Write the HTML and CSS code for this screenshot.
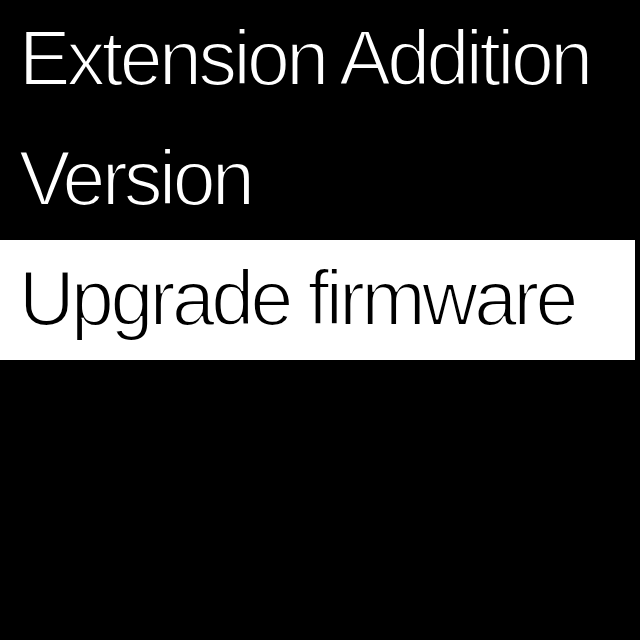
FILE: index.html
```html
<!DOCTYPE html>
<html>
<head>
<meta charset="utf-8">
<link rel="stylesheet" href="styles.css">
</head>
<body>
<div class="screen">
  <div class="item">Extension Addition</div>
  <div class="item">Version</div>
  <div class="item selected">Upgrade firmware</div>
</div>
</body>
</html>
```
FILE: styles.css
```css
html, body {
  margin: 0;
  padding: 0;
  background: #000;
}
.screen {
  width: 640px;
  height: 640px;
  background: #000;
  display: flex;
  flex-direction: column;
}
.item {
  width: 635px;
  height: 120px;
  box-sizing: border-box;
  padding-left: 19px;
  font-family: "Liberation Sans", Arial, sans-serif;
  font-size: 77px;
  line-height: 116px;
  letter-spacing: -3.5px;
  font-variant-ligatures: none;
  color: #fff;
  -webkit-text-stroke: 2px #000;
  white-space: nowrap;
}
.item.selected {
  background: #fff;
  color: #000;
  -webkit-text-stroke: 2px #fff;
}
```
